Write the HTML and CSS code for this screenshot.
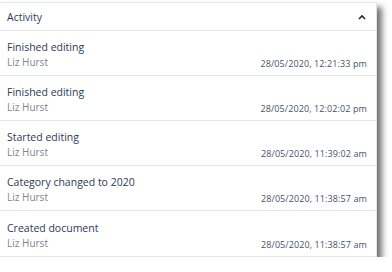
FILE: index.html
```html
<!DOCTYPE html>
<html lang="en">
<head>
  <meta charset="UTF-8">
  <title>Activity</title>
  <link rel="stylesheet" href="styles.css">
</head>
<body>
  <div class="panel">
    <div class="panel-header">
      <span class="panel-title">Activity</span>
      <svg class="chevron" width="8" height="6" viewBox="0 0 8 6">
        <path d="M1 5 L4 2 L7 5" fill="none" stroke="#1f2d3d" stroke-width="1.6"/>
      </svg>
    </div>
    <ul class="activity-list">
      <li class="activity">
        <div class="activity-text">
          <div class="activity-title">Finished editing</div>
          <div class="activity-user">Liz Hurst</div>
        </div>
        <div class="activity-date">28/05/2020, 12:21:33 pm</div>
      </li>
      <li class="activity">
        <div class="activity-text">
          <div class="activity-title">Finished editing</div>
          <div class="activity-user">Liz Hurst</div>
        </div>
        <div class="activity-date">28/05/2020, 12:02:02 pm</div>
      </li>
      <li class="activity">
        <div class="activity-text">
          <div class="activity-title">Started editing</div>
          <div class="activity-user">Liz Hurst</div>
        </div>
        <div class="activity-date">28/05/2020, 11:39:02 am</div>
      </li>
      <li class="activity">
        <div class="activity-text">
          <div class="activity-title">Category changed to 2020</div>
          <div class="activity-user">Liz Hurst</div>
        </div>
        <div class="activity-date">28/05/2020, 11:38:57 am</div>
      </li>
      <li class="activity">
        <div class="activity-text">
          <div class="activity-title">Created document</div>
          <div class="activity-user">Liz Hurst</div>
        </div>
        <div class="activity-date">28/05/2020, 11:38:57 am</div>
      </li>
    </ul>
  </div>
</body>
</html>
```
FILE: styles.css
```css
body {
  margin: 0;
  padding: 2px 0 0 0;
  background: #fff;
  font-family: "Open Sans", Arial, sans-serif;
}
.panel {
  width: 377px;
  background: #fff;
  border: 1px solid #e3e6ea;
  border-left: none;
  box-sizing: border-box;
  box-shadow: 5px 5px 6px rgba(0, 0, 0, 0.55);
}
.panel-header {
  display: flex;
  justify-content: space-between;
  align-items: center;
  height: 27px;
  padding: 0 10px 0 7px;
  border-bottom: 1px solid #e3e6ea;
}
.panel-title {
  font-size: 10.5px;
  color: #2b3a55;
}
.chevron {
  display: block;
}
.activity-list {
  list-style: none;
  margin: 0;
  padding: 0;
}
.activity {
  display: flex;
  justify-content: space-between;
  align-items: flex-end;
  height: 45px;
  padding: 0 9px 0 7px;
  border-bottom: 1px solid #e3e6ea;
  box-sizing: border-box;
}
.activity:last-child {
  border-bottom: none;
}
.activity-text {
  padding-bottom: 5px;
}
.activity-title {
  font-size: 10.5px;
  color: #2b3a55;
  line-height: 16px;
}
.activity-user {
  font-size: 10px;
  color: #80858c;
  line-height: 15px;
}
.activity-date {
  font-size: 9px;
  color: #44546a;
  letter-spacing: 0.1px;
  padding-bottom: 5px;
}
```
